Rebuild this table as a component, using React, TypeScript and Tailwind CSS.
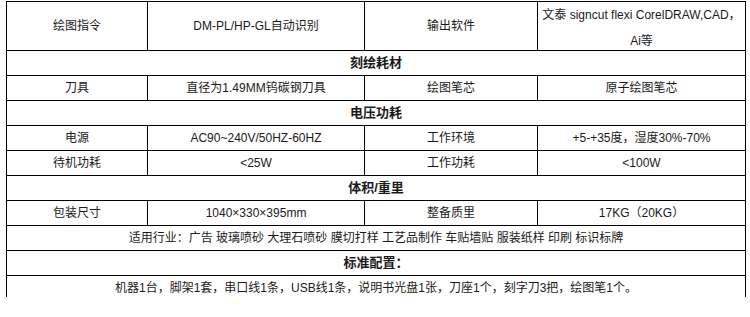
import React from 'react';

interface SpecRow {
  cells: string[];
}

type Row =
  | { kind: 'head'; text: string }
  | { kind: 'full'; text: string }
  | { kind: 'spec'; cells: string[] };

const rows: Row[] = [
  { kind: 'spec', cells: ['刀具', '直径为1.49MM钨碳钢刀具', '绘图笔芯', '原子绘图笔芯'] },
  { kind: 'head', text: '电压功耗' },
  { kind: 'spec', cells: ['电源', 'AC90~240V/50HZ-60HZ', '工作环境', '+5-+35度，湿度30%-70%'] },
  { kind: 'spec', cells: ['待机功耗', '<25W', '工作功耗', '<100W'] },
  { kind: 'head', text: '体积/重里' },
  { kind: 'spec', cells: ['包装尺寸', '1040×330×395mm', '整备质里', '17KG（20KG）'] },
  { kind: 'full', text: '适用行业：广告 玻璃喷砂 大理石喷砂 膜切打样 工艺品制作 车贴墙贴 服装纸样 印刷 标识标牌' },
  { kind: 'head', text: '标准配置：' },
  { kind: 'full', text: '机器1台，脚架1套，串口线1条，USB线1条，说明书光盘1张，刀座1个，刻字刀3把，绘图笔1个。' },
];

const colW = ['w-[141px] border-r', 'w-[217px] border-r', 'w-[173px] border-r', 'flex-1'];

const SpecCells: React.FC<SpecRow> = ({ cells }) => (
  <div className="flex h-[25px] border-b border-black">
    {cells.map((c, i) => (
      <div key={i} className={`${colW[i]} border-black flex items-center justify-center`}>
        {c}
      </div>
    ))}
  </div>
);

const App: React.FC = () => {
  return (
    <div
      className="w-[750px] h-[317px] bg-white text-[12px] text-[#1a1a1a]"
      style={{ fontFamily: '"Liberation Sans", "Noto Sans CJK SC", sans-serif' }}>
      <div className="h-[297px] overflow-hidden pt-[1px]">
        <div className="ml-[6px] w-[740px] border-t border-l border-r border-black">
          {/* 首行：绘图指令 */}
          <div className="flex h-[49px] border-b border-black">
            <div className="w-[141px] border-r border-black flex items-center justify-center">绘图指令</div>
            <div className="w-[217px] border-r border-black flex items-center justify-center">
              DM-PL/HP-GL自动识别
            </div>
            <div className="w-[173px] border-r border-black flex items-center justify-center">输出软件</div>
            <div className="flex-1 px-[4px] text-center leading-[26px]">
              文泰 signcut flexi CorelDRAW,CAD，Ai等
            </div>
          </div>
          <div className="h-[25px] border-b border-black flex items-center justify-center text-[13px] font-bold">
            刻绘耗材
          </div>
          {rows.map((r, i) => {
            if (r.kind === 'spec') return <SpecCells key={i} cells={r.cells} />;
            return (
              <div
                key={i}
                className={`h-[25px] border-b border-black flex items-center justify-center ${
                  r.kind === 'head' ? 'text-[13px] font-bold' : ''
                }`}>
                {r.text}
              </div>
            );
          })}
        </div>
      </div>
    </div>
  );
};

export default App;
